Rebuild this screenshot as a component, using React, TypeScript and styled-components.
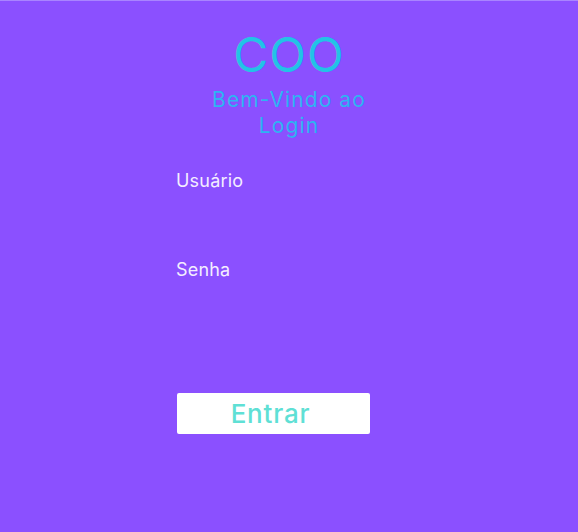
import React from "react";
import styled, { createGlobalStyle } from "styled-components";

const Global = createGlobalStyle`
  html, body { margin: 0; padding: 0; background: #8b50ff; }
  body { font-family: Inter, "Noto Sans", sans-serif; }
`;

const Page = styled.div`
  min-height: 532px;
  box-sizing: border-box;
  background: #8b50ff;
  border-top: 1px solid #a984ff;
  display: flex;
  flex-direction: column;
`;

const Header = styled.header`
  display: flex;
  flex-direction: column;
  align-items: center;
  padding-top: 26px;
`;

const Logo = styled.h1`
  margin: 0;
  font-size: 48px;
  line-height: 56px;
  font-weight: 400;
  color: #22c3e6;
  letter-spacing: 1px;
`;

const Subtitle = styled.h2`
  margin: 4px 0 0;
  width: 180px;
  text-align: center;
  font-size: 21px;
  line-height: 26px;
  font-weight: 400;
  letter-spacing: 1.1px;
  color: #2db4f2;
`;

const Form = styled.form`
  display: flex;
  flex-direction: column;
  width: 194px;
  margin: 30px 0 0 176px;
`;

const Field = styled.div`
  display: flex;
  flex-direction: column;
  height: 89px;
`;

const Label = styled.label`
  font-size: 18px;
  line-height: 24px;
  letter-spacing: 0.2px;
  color: #f4eeff;
`;

const Input = styled.input`
  background: transparent;
  border: none;
  outline: none;
  height: 30px;
  padding: 0;
  color: #fff;
  font-size: 16px;
`;

const Button = styled.button`
  margin: 46px 0 0 1px;
  width: 193px;
  height: 41px;
  background: #ffffff;
  border: none;
  border-radius: 2px;
  font-family: inherit;
  font-size: 26px;
  font-weight: 500;
  letter-spacing: 0.8px;
  color: #5fe0d5;
  padding: 0;
  text-align: center;
  cursor: pointer;
  text-indent: -6px;
`;

export default function App() {
  return (
    <>
      <Global />
      <Page>
        <Header>
          <Logo>COO</Logo>
          <Subtitle>Bem-Vindo ao Login</Subtitle>
        </Header>
        <Form onSubmit={(e) => e.preventDefault()}>
          <Field>
            <Label htmlFor="user">Usuário</Label>
            <Input id="user" />
          </Field>
          <Field>
            <Label htmlFor="pass">Senha</Label>
            <Input id="pass" type="password" />
          </Field>
          <Button type="submit">Entrar</Button>
        </Form>
      </Page>
    </>
  );
}
